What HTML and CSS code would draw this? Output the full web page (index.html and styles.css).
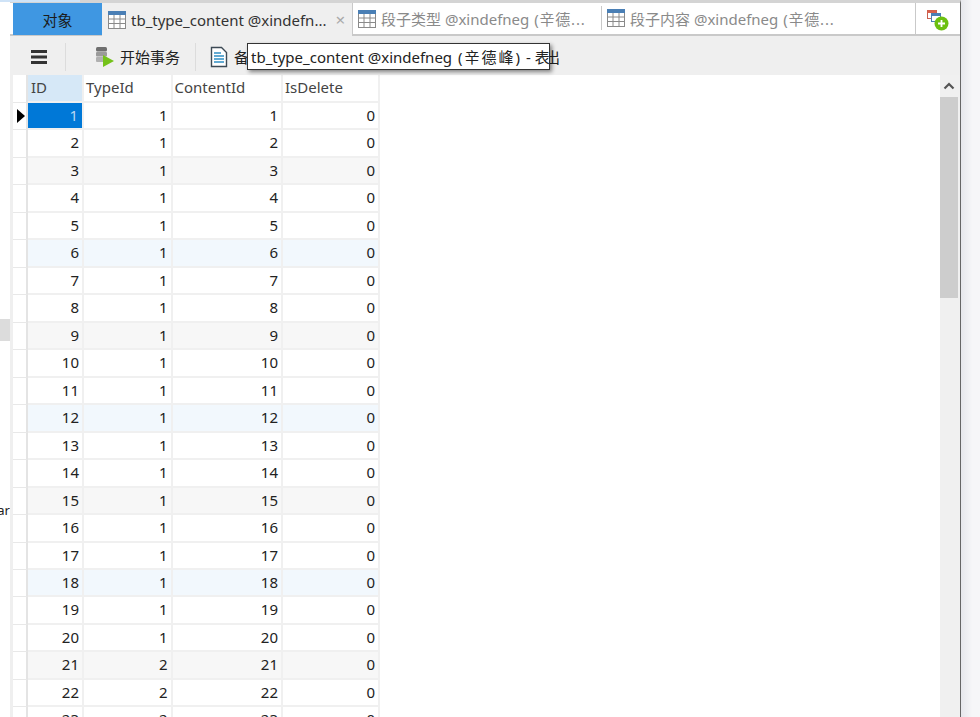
FILE: index.html
```html
<!DOCTYPE html>
<html lang="zh">
<head>
<meta charset="utf-8">
<title>tb_type_content</title>
<link rel="stylesheet" href="styles.css">
</head>
<body>
<div class="desktop">
  <aside class="left-strip">
    <div class="strip-blue"></div>
    <div class="strip-sel"></div>
    <div class="strip-text">ar</div>
  </aside>
  <main class="window">
    <div class="tabbar">
      <div class="tab-objects">对象</div>
      <div class="tab tab-active">
        <svg class="tbl" viewBox="0 0 20 20"><use href="#grid"/></svg>
        <span class="tab-label">tb_type_content @xindefn...</span>
        <span class="tab-x">×</span>
      </div>
      <div class="tab-rest">
        <div class="tab tab-a">
          <svg class="tbl" viewBox="0 0 20 20"><use href="#grid"/></svg>
          <span class="tab-label">段子类型 @xindefneg <span class="owner">(辛德...</span></span>
        </div>
        <div class="tab tab-b">
          <svg class="tbl" viewBox="0 0 20 20"><use href="#grid"/></svg>
          <span class="tab-label">段子内容 @xindefneg <span class="owner">(辛德...</span></span>
        </div>
      </div>
      <div class="tab-add">
        <svg width="24" height="24" viewBox="0 0 24 24">
          <rect x="1.500" y="1.500" width="9" height="8" fill="#fff" stroke="#c9604f"/>
          <rect x="1.500" y="1.500" width="9" height="2.500" fill="#d9604c"/>
          <rect x="5.500" y="4.500" width="9" height="8" fill="#fff" stroke="#4a7fb5"/>
          <rect x="5.500" y="4.500" width="9" height="2.500" fill="#4a7fb5"/>
          <circle cx="15.500" cy="14.500" r="7" fill="#6cc010"/>
          <path d="M15.500 11v7M12 14.500h7" stroke="#fff" stroke-width="1.800"/>
        </svg>
      </div>
    </div>
    <div class="toolbar">
      <svg class="menu-icon" width="18" height="16" viewBox="0 0 18 16"><path d="M1 2.500h16M1 8h16M1 13.500h16" stroke="#333" stroke-width="3"/></svg>
      <span class="sep sep-a"></span>
      <div class="tool tool-begin">
        <svg width="22" height="22" viewBox="0 0 22 22">
          <rect x="2" y="1" width="11" height="4.500" rx="1.500" fill="#6f6f6f"/>
          <rect x="2" y="6" width="11" height="4.500" rx="1" fill="#9a9a9a"/>
          <rect x="2" y="11" width="8" height="5" rx="1" fill="#b0b0b0"/>
          <path d="M9 9l11 6L9 21z" fill="#74c21a"/>
        </svg>
        <span>开始事务</span>
      </div>
      <span class="sep sep-b"></span>
      <div class="tool tool-note">
        <svg width="18" height="22" viewBox="0 0 18 22">
          <path d="M1.500 1.500h10l5 5v14h-15z" fill="#fff" stroke="#3d4a55" stroke-width="1.400"/>
          <path d="M4 7h7M4 10h10M4 13h10M4 16h10" stroke="#2f8fc4" stroke-width="1.300"/>
        </svg>
        <span>备注</span>
        <span class="tool-out">导出</span>
      </div>
      <div class="tooltip">tb_type_content @xindefneg <span class="owner-full">(辛德峰)</span> - 表</div>
    </div>
    <div class="content">
      <div class="grid" id="grid-table">
        <div class="row head">
          <div class="marker"></div>
          <div class="cell c1 head-id">ID</div>
          <div class="cell c2">TypeId</div>
          <div class="cell c3">ContentId</div>
          <div class="cell c4">IsDelete</div>
        </div>
      </div>
      <div class="scrollbar">
        <div class="scroll-up">
          <svg width="12" height="8" viewBox="0 0 12 8"><path d="M1.500 6.500L6 2l4.500 4.500" fill="none" stroke="#555" stroke-width="2.200"/></svg>
        </div>
        <div class="scroll-thumb"></div>
      </div>
    </div>
  </main>
  <div class="right-strip"></div>
</div>
<svg class="defs" width="0" height="0">
  <defs>
    <g id="grid">
      <rect x="1.500" y="1.500" width="17" height="17" fill="#fff" stroke="#8a8a8a"/>
      <rect x="1" y="1" width="18" height="4" fill="#4a7fb5"/>
      <path d="M7 5v13M13 5v13M2 9h16M2 13.500h16" stroke="#8a8a8a" stroke-width="1"/>
    </g>
  </defs>
</svg>
<script src="grid.js"></script>
</body>
</html>
```

FILE: grid.js
```js
const table = document.getElementById('grid-table');
const rows = [];
for (let i = 1; i <= 23; i++) {
  rows.push([i, i <= 20 ? 1 : 2, i, 0]);
}
rows.forEach(([id, type, content, del]) => {
  const row = document.createElement('div');
  let cls = 'row';
  if (id % 6 === 0) cls += ' tint-blue';
  else if (id % 6 === 3) cls += ' tint-gray';
  if (id === 1) cls += ' current';
  row.className = cls;
  row.innerHTML =
    '<div class="marker">' + (id === 1 ? '<span class="arrow"></span>' : '') + '</div>' +
    '<div class="cell c1 num">' + id + '</div>' +
    '<div class="cell c2 num">' + type + '</div>' +
    '<div class="cell c3 num">' + content + '</div>' +
    '<div class="cell c4 num">' + del + '</div>';
  table.appendChild(row);
});
```

FILE: styles.css
```css
* { box-sizing: border-box; }
html, body { margin: 0; height: 100%; overflow: hidden; }
body {
  font-family: "Noto Sans", "Open Sans", "Noto Sans CJK SC", sans-serif;
  font-size: 15px;
  color: #222;
  background: #fff;
}
.desktop { display: flex; width: 980px; height: 717px; overflow: hidden; }

.left-strip { width: 10px; flex: none; position: relative; background: #fff; }
.strip-blue { position: absolute; left: 0; top: 0; width: 80px; height: 2px; background: #cfe3f7; z-index: 1; }
.strip-sel { position: absolute; left: 0; top: 319px; width: 10px; height: 22px; background: #dcdcdc; }
.strip-text { position: absolute; left: 0; top: 501px; width: 10px; overflow: hidden; direction: rtl; font-size: 13px; line-height: 18px; }

.window {
  width: 951px;
  flex: none;
  background: #efefef;
  border-top: 3px solid #d4d4d4;
  border-right: 1px solid #666;
  display: flex;
  flex-direction: column;
  overflow: hidden;
}
.right-strip { flex: 1; background: linear-gradient(to right, #e6e7ec, #f6f6f8 60%); }

.tabbar { height: 33px; flex: none; display: flex; background: #fff; border-bottom: 2px solid #c9c9c9; padding-left: 3px; position: relative; }
.tab-objects {
  width: 89px;
  flex: none;
  margin-bottom: -1px;
  background: #3f97e2;
  color: #1b1b1b;
  display: flex;
  align-items: center;
  justify-content: center;
}
.tab { display: flex; align-items: center; height: 100%; }
.tbl { width: 20px; height: 20px; flex: none; }
.tab-label { white-space: nowrap; margin-left: 4px; }
.owner { letter-spacing: .8px; margin-left: 1px; }
.tab-active { width: 250px; padding-left: 5px; background: #efefef; margin-bottom: -2px; height: 33px; flex: none; }
.tab-active .tab-label { color: #333; }
.tab-x { margin-left: 9px; color: #aaa; font-size: 17px; }
.tab-rest { width: 563px; flex: none; display: flex; border-left: 1px solid #c9c9c9; }
.tab-a, .tab-b { color: #8a8a8a; }
.tab-a { width: 248px; padding-left: 4px; flex: none; }
.tab-b { width: 313px; padding-left: 4px; flex: none; border-left: 1px solid #c9c9c9; height: 24px; margin-top: 3px; }
.tab-add { flex: 1; border-left: 1px solid #c9c9c9; padding-top: 4px; display: flex; align-items: center; justify-content: center; }

.toolbar { height: 39px; flex: none; background: #efefef; display: flex; align-items: center; padding: 2px 0 0 3px; position: relative; }
.menu-icon { margin-left: 17px; flex: none; }
.sep { width: 1px; height: 28px; background: #dcdcdc; flex: none; }
.sep-a { margin-left: 17px; }
.sep-b { margin-left: 15px; }
.tool { display: flex; align-items: center; white-space: nowrap; color: #222; }
.tool-begin { margin-left: 28px; gap: 4px; }
.tool-note { margin-left: 14px; gap: 6px; }
.tool-out { margin-left: 260px; }
.tooltip {
  position: absolute;
  left: 237px;
  top: 7px;
  height: 27px;
  width: 303px;
  padding-left: 3px;
  line-height: 26px;
  white-space: nowrap;
  background: #fff;
  border: 1px solid #333;
  box-shadow: 2px 2px 4px rgba(0, 0, 0, .45);
  color: #222;
  overflow: hidden;
}
.owner-full { letter-spacing: 2px; margin-left: 2px; }

.content { flex: 1; min-height: 0; display: flex; background: #fff; margin-left: 3px; overflow: hidden; }
.grid { flex: 1; min-width: 0; }
.row { display: flex; height: 27.47px; }
.row.head { height: 28px; }
.marker { width: 15px; flex: none; border-right: 2px solid #e4e4e4; border-bottom: 1px solid #e8e8e8; background: #fff; display: flex; align-items: center; justify-content: center; }
.arrow { width: 0; height: 0; border-style: solid; border-width: 7.500px 0 7.500px 8px; border-color: transparent transparent transparent #000; margin-left: 3px; }
.cell { border-right: 2px solid #f0f0f0; border-bottom: 2px solid #f0f0f0; line-height: 25px; padding: 0 3px; white-space: nowrap; }
.c1 { width: 56px; }
.c2 { width: 88.500px; }
.c3 { width: 110.500px; }
.c4 { width: 97px; }
.head .cell { color: #444; background: #fff; padding-left: 2px; }
.head .head-id { background: #d6e8f7; padding-left: 3px; }
.num { text-align: right; }
.current .c1.num { padding-right: 4px; }
.tint-blue .cell { background: #f2f8fd; }
.tint-gray .cell { background: #f7f7f7; }
.current .c1 { background: #0078d7; color: #b9d6f2; }
.scrollbar { width: 20px; flex: none; background: #f0f0f0; padding-right: 2px; display: flex; flex-direction: column; }
.scroll-up { height: 22px; display: flex; align-items: center; justify-content: center; }
.scroll-thumb { height: 201px; background: #cdcdcd; }
.defs { position: absolute; }
```
